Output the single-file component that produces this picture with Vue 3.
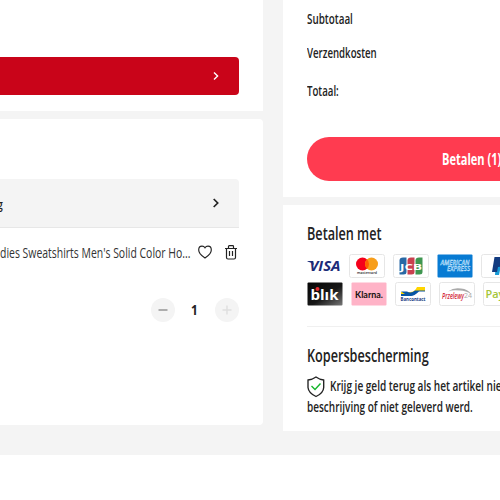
<script setup>
const totals = [
  { label: 'Subtotaal', cls: 'sub' },
  { label: 'Verzendkosten', cls: 'ship' },
  { label: 'Totaal:', cls: 'total' },
]
</script>

<template>
  <div class="page">
    <div class="columns">
      <main class="left">
        <section class="card top-card">
          <div class="banner">
            <svg width="6" height="10" viewBox="0 0 6 10"><path d="M1 1.500 4.600 5 1 8.500" fill="none" stroke="#fff" stroke-width="1.400" /></svg>
          </div>
        </section>
        <section class="card cart">
          <div class="shipping">
            <span class="shipping-end">g</span>
            <svg width="7" height="10" viewBox="0 0 7 10"><path d="M1.700 1 5.700 5 1.700 9" fill="none" stroke="#222" stroke-width="1.700" /></svg>
          </div>
          <div class="product">
            <div class="name-box"><span class="name">dies Sweatshirts Men's Solid Color Ho...</span></div>
            <svg class="heart" width="14" height="14" viewBox="0 0 14 14"><path d="M7 13C4.800 11.600.7 8.800.7 5 .7 2.600 2.200 1.100 4 1.100c1.400 0 2.400.7 3 1.700C7.600 1.800 8.600 1.100 10 1.100c1.800 0 3.300 1.500 3.300 3.900C13.300 8.800 9.200 11.600 7 13Z" fill="none" stroke="#222" stroke-width="1.150" /></svg>
            <svg class="trash" width="12" height="15" viewBox="0 0 12 15"><path d="M0 3.500H12M3.500 3V1.500Q3.500.7 4.300.7H7.700Q8.500.7 8.500 1.500V3M1.500 3.500V12.500Q1.500 14 3 14H9Q10.500 14 10.500 12.500V3.500M4.500 6V11M7.500 6V11" fill="none" stroke="#222" stroke-width="1.200" /></svg>
          </div>
          <div class="quantity">
            <span class="round"><svg width="10" height="10" viewBox="0 0 10 10"><path d="M.5 5H9.500" stroke="#a0a0a0" stroke-width="1.700" /></svg></span>
            <span class="count">1</span>
            <span class="round"><svg width="10" height="10" viewBox="0 0 10 10"><path d="M.5 5H9.500M5 .5V9.500" stroke="#dedede" stroke-width="1.400" /></svg></span>
          </div>
        </section>
      </main>

      <aside class="right">
        <section class="card summary">
          <div v-for="row in totals" :key="row.label" class="total-row" :class="row.cls"><span>{{ row.label }}</span></div>
          <button class="pay"><span>Betalen (1)</span></button>
        </section>

        <section class="card info">
          <h2 class="pay-title">Betalen met</h2>
          <div class="logos first">
            <svg class="logo" viewBox="0 0 36 24">
              <text x="4.500" y="17" font-size="14" font-weight="700" font-style="italic" fill="#1c2b78" textLength="31" lengthAdjust="spacingAndGlyphs">VISA</text>
              <path d="M2.500 7H8L9 11Q6.500 8 2.500 7.500Z" fill="#1c2b78" />
            </svg>
            <svg class="logo" viewBox="0 0 36 24">
              <rect class="frame" x=".5" y=".5" width="35" height="23" rx="2" />
              <circle cx="13.500" cy="10" r="6.500" fill="#f5001b" /><circle cx="22.500" cy="10" r="6.500" fill="#f79e1b" />
              <path d="M18 5.300A6.500 6.500 0 0 1 18 14.700A6.500 6.500 0 0 1 18 5.300Z" fill="#ff5f00" />
              <text x="8" y="20" font-size="4" font-weight="600" fill="#222" textLength="20" lengthAdjust="spacingAndGlyphs">mastercard</text>
            </svg>
            <svg class="logo" viewBox="0 0 36 24">
              <rect class="frame" x=".5" y=".5" width="35" height="23" rx="2" />
              <path d="M10 3.500H13.500V18Q13.500 20.500 10.500 20.500H6.500V6.500Q6.500 3.500 10 3.500Z" fill="#2869a5" />
              <path d="M18 3.500H21.500V18Q21.500 20.500 18.500 20.500H14.500V6.500Q14.500 3.500 18 3.500Z" fill="#c9404f" />
              <path d="M26 3.500H29.500V18Q29.500 20.500 26.500 20.500H22.500V6.500Q22.500 3.500 26 3.500Z" fill="#3f9650" />
              <text x="7" y="15.500" font-size="9" font-weight="700" fill="#fff" textLength="22" lengthAdjust="spacingAndGlyphs">JCB</text>
            </svg>
            <svg class="logo" viewBox="0 0 36 24">
              <rect x=".5" y=".5" width="35" height="23" rx="1" fill="#087bd3" />
              <g class="amex">
                <text x="3.500" y="11" textLength="29" lengthAdjust="spacingAndGlyphs">AMERICAN</text>
                <text x="10" y="16.800" textLength="23" lengthAdjust="spacingAndGlyphs">EXPRESS</text>
              </g>
            </svg>
            <svg class="logo" viewBox="0 0 36 24">
              <rect class="frame" x=".5" y=".5" width="35" height="23" rx="2" />
              <path d="M15 7H21Q26 8 25 12Q24 16 19 16L18 21H14Z" fill="#179bd7" />
              <path d="M13.500 3H21Q25 4 24 8Q23 13 17 13L16 18H11Z" fill="#123b80" />
            </svg>
          </div>
          <div class="logos second">
            <svg class="logo" viewBox="0 0 36 24">
              <defs><linearGradient id="blikShade" x1="0" x2="1" y1="0" y2="1"><stop stop-color="#050505" /><stop offset=".55" stop-color="#171717" /><stop offset="1" stop-color="#777" /></linearGradient></defs>
              <rect x=".5" y=".5" width="35" height="23" rx="1" fill="url(#blikShade)" />
              <text x="3.500" y="18" font-size="15" font-weight="700" fill="#fff" textLength="28" lengthAdjust="spacingAndGlyphs">blık</text>
              <circle cx="10.500" cy="7" r="2" fill="#e42a30" />
            </svg>
            <svg class="logo" viewBox="0 0 36 24">
              <rect x=".5" y=".5" width="35" height="23" rx="1" fill="#ffb3c7" />
              <text class="klarna" x="4" y="15.500" textLength="28" lengthAdjust="spacingAndGlyphs">Klarna.</text>
            </svg>
            <svg class="logo" viewBox="0 0 36 24">
              <rect class="frame" x=".5" y=".5" width="35" height="23" rx="2" />
              <path d="M15 10Q20 10 22 5H30V9H23Q20 13 15 13H6V10Z" fill="#ffd500" />
              <path d="M6 9.500H12Q16 12 20 8.500H30V9.500H24Q19 14 16 14H6V12H10Z" fill="#0755a5" />
              <text x="5.500" y="19.300" font-size="5" font-weight="700" fill="#173b83" textLength="25" lengthAdjust="spacingAndGlyphs">Bancontact</text>
            </svg>
            <svg class="logo" viewBox="0 0 36 24">
              <rect class="frame" x=".5" y=".5" width="35" height="23" rx="2" />
              <path d="M9 9.500Q15 5 22 6.500Q29 7 32 12Q27 8.500 21 8.500Q14 7.500 9 9.500Z" fill="#aaa" />
              <text x="3" y="16.500" font-size="8" font-weight="600" font-style="italic" fill="#d31f3a" textLength="22" lengthAdjust="spacingAndGlyphs">Przelewy</text>
              <text x="25" y="16" font-size="8" fill="#aaa" textLength="8" lengthAdjust="spacingAndGlyphs">24</text>
            </svg>
            <svg class="logo" viewBox="0 0 36 24">
              <rect class="frame" x=".5" y=".5" width="35" height="23" rx="2" />
              <text x="2.500" y="16" font-size="11" font-weight="600" fill="#a4c53a" textLength="27" lengthAdjust="spacingAndGlyphs">PayU</text>
            </svg>
          </div>
          <div class="protection">
            <h2>Kopersbescherming</h2>
            <div class="promise">
              <svg width="18" height="22" viewBox="0 0 18 22"><path d="M9 1Q12.500 3.500 16.700 4V11.500Q16.500 17 9 20.500Q1.500 17 1 11.500V4Q5.500 3.500 9 1Z" fill="none" stroke="#222" stroke-width="1.350" /><path d="M4.500 10 8 13.500 13.500 7.500" fill="none" stroke="#13b52b" stroke-width="1.400" /></svg>
              <span class="promise-text">Krijg je geld terug als het artikel niet</span>
            </div>
            <div class="promise-second"><span>beschrijving of niet geleverd werd.</span></div>
          </div>
        </section>
      </aside>
    </div>
  </div>
</template>

<style>
body { margin: 0; background: #fff; overflow: hidden; }
</style>

<style scoped>
.page { width: 500px; height: 500px; overflow: hidden; background: #fff; color: #222; font-family: "Open Sans", "Noto Sans", sans-serif; }
.page * { box-sizing: border-box; }
.columns { height: 455px; display: flex; gap: 20px; background: #f4f4f4; }
.left { width: 263px; flex: none; display: flex; flex-direction: column; gap: 8px; }
.right { width: 290px; flex: none; display: flex; flex-direction: column; gap: 8px; }
.card { background: #fff; }
.top-card { height: 111px; padding: 57px 24px 0 0; }
.banner { height: 38px; border-radius: 0 4px 4px 0; background: #c90419; display: flex; align-items: center; justify-content: flex-end; padding-right: 20px; }
.cart { height: 306px; border-radius: 0 4px 4px 0; padding: 60px 24px 0 0; }
.shipping { height: 49px; border-bottom: 1px solid #e7e7e7; border-radius: 0 4px 0 0; background: #f4f4f4; display: flex; align-items: center; justify-content: space-between; padding-right: 20px; }
span { display: inline-block; white-space: nowrap; transform-origin: left center; }
.shipping-end { font-size: 13px; font-weight: 600; margin-left: -3px; transform: scaleX(.8); padding-top: 2px; }
.product { display: flex; height: 48px; align-items: center; }
.name-box { width: 198px; flex: none; }
.name { font-size: 14px; line-height: 20px; transform: scaleX(.746); color: #333; }
.heart { margin-right: 13px; }
.quantity { display: flex; justify-content: space-between; align-items: center; width: 88px; margin: 22px 0 0 151px; }
.round { width: 24px; height: 24px; border-radius: 50%; background: #f4f4f4; display: flex; align-items: center; justify-content: center; }
.count { font-size: 14px; line-height: 20px; font-weight: 700; transform: scaleX(.85); }
.summary { height: 197px; padding: 8px 24px 0; }
.total-row { height: 20px; line-height: 21px; font-size: 14px; font-weight: 600; }
.sub { margin-bottom: 14px; }
.ship { margin-bottom: 18px; }
.total-row span { transform: scaleX(.69); }
.sub span { transform: scaleX(.705); }
.pay { display: flex; align-items: center; width: 400px; height: 44px; margin-top: 37px; padding: 0 0 0 135px; border: 0; border-radius: 22px; background: #ff3b50; color: #fff; font: 700 16px "Open Sans", sans-serif; }
.pay span { transform: scaleX(.69); }
.info { height: 226px; padding: 16px 24px 0; }
h2 { margin: 0; height: 24px; line-height: 24px; font-size: 18px; font-weight: 600; white-space: nowrap; transform-origin: left; transform: scaleX(.703); }
.logos { display: flex; gap: 8px; height: 24px; }
.logo { width: 36px; height: 24px; flex: none; font-family: "Open Sans", sans-serif; }
.frame { fill: #fff; stroke: #e6e6e6; }
.amex { fill: #55a9e5; stroke: #d9efff; stroke-width: .35; font-size: 7px; font-weight: 600; font-style: italic; }
.klarna { fill: #17120f; font-family: Lato, sans-serif; font-size: 9px; font-weight: 700; }
.first { margin: 9px 0 0 -2px; }
.second { margin-top: 4px; }
.protection { border-top: 1px solid #f0f0f0; margin-top: 20px; padding-top: 16px; width: 400px; }
.promise { display: flex; align-items: center; gap: 5px; height: 21px; margin-top: 9px; font-size: 14px; font-weight: 600; }
.promise-text { transform: scaleX(.719); line-height: 20px; padding-bottom: 2px; }
.promise-second { height: 21px; line-height: 20px; font-size: 14px; font-weight: 600; }
.promise-second span { transform: scaleX(.714); }
</style>
